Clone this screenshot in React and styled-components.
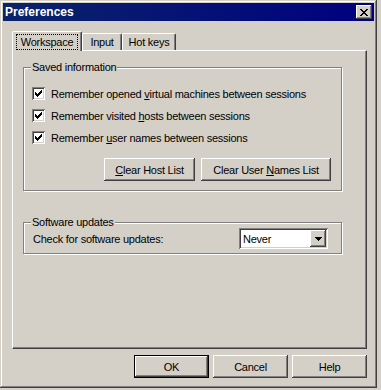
import React from 'react';
import styled, { createGlobalStyle } from 'styled-components';

const face = '#d4d0c8';
const shade = '#808080';
const dark = '#404040';

const raised = `inset -1px -1px ${dark}, inset 1px 1px #ffffff, inset -2px -2px ${shade}, inset 2px 2px ${face}`;
const sunken = `inset 1px 1px ${shade}, inset -1px -1px #ffffff, inset 2px 2px ${dark}, inset -2px -2px ${face}`;

const GlobalStyle = createGlobalStyle`
  body {
    margin: 0;
    background: ${face};
    font-family: "Liberation Sans", Arial, sans-serif;
    font-size: 11px;
    letter-spacing: -0.25px;
    color: #000;
  }
`;

const Window = styled.div`
  width: 377px;
  height: 388px;
  box-sizing: border-box;
  padding: 3px;
  background: ${face};
  box-shadow: inset -1px -1px ${dark}, inset 1px 1px ${face}, inset -2px -2px ${shade}, inset 2px 2px #ffffff;
  display: flex;
  flex-direction: column;
`;

const TitleBar = styled.div`
  height: 18px;
  flex-shrink: 0;
  display: flex;
  align-items: center;
  justify-content: space-between;
  padding: 0 2px;
  background: linear-gradient(to right, #0a246a, #000080);
`;

const Title = styled.span`
  color: #ffffff;
  font-weight: bold;
  font-size: 12px;
  letter-spacing: 0;
`;

const CloseButton = styled.div`
  width: 16px;
  height: 14px;
  box-sizing: border-box;
  display: flex;
  align-items: center;
  justify-content: center;
  background: ${face};
  box-shadow: ${raised};
`;

const Body = styled.div`
  flex: 1;
  display: flex;
  flex-direction: column;
  padding: 10px 7px 0 9px;
`;

const TabStrip = styled.div`
  display: flex;
  align-items: flex-end;
  height: 19px;
  position: relative;
  z-index: 1;
`;

const Tab = styled.div`
  box-sizing: border-box;
  width: ${({ $w }) => $w}px;
  height: ${({ $active }) => ($active ? 20 : 17)}px;
  margin-bottom: ${({ $active }) => ($active ? -1 : 0)}px;
  border-top: 1px solid #ffffff;
  border-left: 1px solid #ffffff;
  border-right: 1px solid ${dark};
  border-radius: 2px 2px 0 0;
  box-shadow: inset -1px 0 ${shade};
  background: ${face};
  display: flex;
  align-items: center;
  justify-content: center;
`;

const FocusLabel = styled.span`
  outline: 1px dotted #000;
  padding: 1px 4px;
`;

const Panel = styled.div`
  height: 299px;
  box-sizing: border-box;
  border-top: 1px solid #ffffff;
  border-left: 1px solid #ffffff;
  border-right: 1px solid ${dark};
  border-bottom: 1px solid ${dark};
  box-shadow: inset -1px -1px ${shade};
  padding: 16px 0 0 10px;
  display: flex;
  flex-direction: column;
  gap: 31px;
`;

const Group = styled.div`
  position: relative;
  width: 319px;
  box-sizing: border-box;
  border: 1px solid ${shade};
  box-shadow: inset 1px 1px #ffffff, 1px 1px #ffffff;
  padding: ${({ $pad }) => $pad};
`;

const Legend = styled.span`
  position: absolute;
  top: -7px;
  left: 7px;
  padding: 0 1px;
  line-height: 13px;
  background: ${face};
`;

const CheckList = styled.div`
  display: flex;
  flex-direction: column;
  gap: 9px;
`;

const CheckRow = styled.label`
  display: flex;
  align-items: center;
  height: 13px;
`;

const Box = styled.span`
  width: 13px;
  height: 13px;
  box-sizing: border-box;
  background: #ffffff;
  box-shadow: ${sunken};
  display: flex;
  align-items: center;
  justify-content: center;
  margin-right: 6px;
`;

const Key = styled.u`
  text-decoration: underline;
`;

const ButtonRow = styled.div`
  display: flex;
  justify-content: flex-end;
  gap: ${({ $gap }) => $gap}px;
  margin-top: ${({ $top }) => $top}px;
  padding-right: ${({ $right }) => $right}px;
`;

const Button = styled.div`
  width: ${({ $w }) => $w}px;
  height: 23px;
  box-sizing: border-box;
  display: flex;
  align-items: center;
  justify-content: center;
  background: ${face};
  border: ${({ $default }) => ($default ? '1px solid #000' : 'none')};
  box-shadow: ${raised};
`;

const UpdateRow = styled.div`
  display: flex;
  align-items: center;
  justify-content: space-between;
`;

const Select = styled.div`
  width: 89px;
  height: 21px;
  box-sizing: border-box;
  padding: 2px;
  background: #ffffff;
  box-shadow: ${sunken};
  display: flex;
  align-items: center;
`;

const SelectValue = styled.span`
  flex: 1;
  padding-left: 2px;
`;

const DropButton = styled.div`
  width: 16px;
  height: 17px;
  box-sizing: border-box;
  background: ${face};
  box-shadow: ${raised};
  display: flex;
  align-items: center;
  justify-content: center;
`;

const Pixels = ({ rows }) => (
  <svg width={rows[0].length} height={rows.length} shapeRendering="crispEdges">
    {rows.flatMap((row, y) =>
      row.split('').map((c, x) =>
        c === 'X' ? <rect key={`${x}-${y}`} x={x} y={y} width="1" height="1" fill="#000" /> : null
      )
    )}
  </svg>
);

const closeGlyph = ['XX....XX', '.XX..XX.', '..XXXX..', '...XX...', '..XXXX..', '.XX..XX.', 'XX....XX'];
const checkGlyph = ['......X', '.....XX', 'X...XXX', 'XX.XXX.', 'XXXXX..', '.XXX...', '..X....'];
const arrowGlyph = ['XXXXXXX', '.XXXXX.', '..XXX..', '...X...'];

const Check = ({ children }) => (
  <CheckRow>
    <Box>
      <Pixels rows={checkGlyph} />
    </Box>
    <span>{children}</span>
  </CheckRow>
);

export default function App() {
  return (
    <>
      <GlobalStyle />
      <Window>
        <TitleBar>
          <Title>Preferences</Title>
          <CloseButton>
            <Pixels rows={closeGlyph} />
          </CloseButton>
        </TitleBar>
        <Body>
          <TabStrip>
            <Tab $w={70} $active>
              <FocusLabel>Workspace</FocusLabel>
            </Tab>
            <Tab $w={40}>Input</Tab>
            <Tab $w={54}>Hot keys</Tab>
          </TabStrip>
          <Panel>
            <Group $pad="19px 0 9px 8px">
              <Legend>Saved information</Legend>
              <CheckList>
                <Check>
                  Remember opened <Key>v</Key>irtual machines between sessions
                </Check>
                <Check>
                  Remember visited <Key>h</Key>osts between sessions
                </Check>
                <Check>
                  Remember <Key>u</Key>ser names between sessions
                </Check>
              </CheckList>
              <ButtonRow $gap={6} $top={14} $right={10}>
                <Button $w={91}>
                  <span>
                    <Key>C</Key>lear Host List
                  </span>
                </Button>
                <Button $w={130}>
                  <span>
                    Clear User <Key>N</Key>ames List
                  </span>
                </Button>
              </ButtonRow>
            </Group>
            <Group $pad="5px 13px 4px 9px">
              <Legend>Software updates</Legend>
              <UpdateRow>
                <span>Check for software updates:</span>
                <Select>
                  <SelectValue>Never</SelectValue>
                  <DropButton>
                    <Pixels rows={arrowGlyph} />
                  </DropButton>
                </Select>
              </UpdateRow>
            </Group>
          </Panel>
          <ButtonRow $gap={4} $top={6} $right={0}>
            <Button $w={75} $default>OK</Button>
            <Button $w={75}>Cancel</Button>
            <Button $w={75}>Help</Button>
          </ButtonRow>
        </Body>
      </Window>
    </>
  );
}
